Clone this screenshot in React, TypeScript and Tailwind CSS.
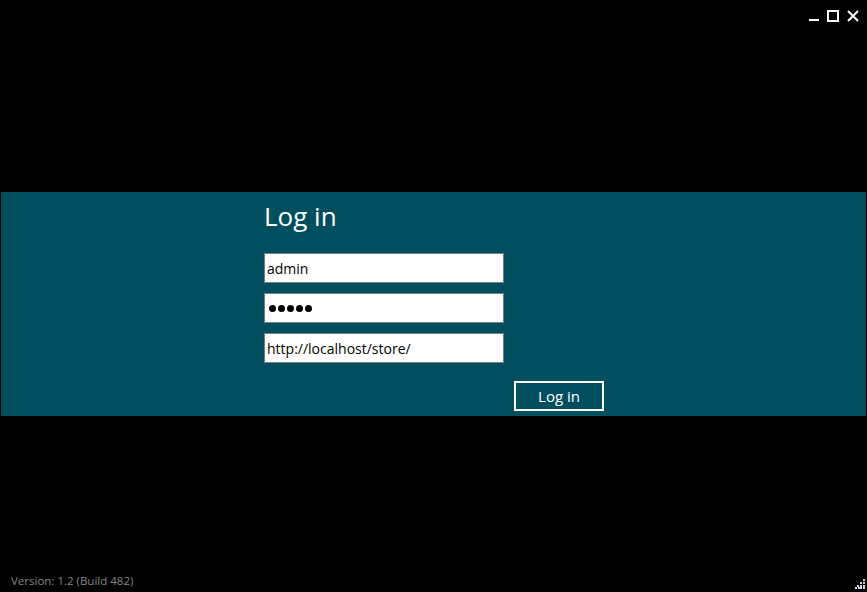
import React from 'react';

const font = { fontFamily: '"Open Sans", "Noto Sans", sans-serif' };

function WindowControls() {
  return (
    <div className="flex items-start justify-end gap-[8px] pr-[8px] pt-[10px]">
      {/* minimize */}
      <svg width="10" height="12" viewBox="0 0 10 12">
        <rect x="0" y="9" width="10" height="2" fill="#fff" />
      </svg>
      {/* maximize */}
      <svg width="12" height="12" viewBox="0 0 12 12">
        <rect x="1" y="1" width="10" height="10" fill="none" stroke="#fff" strokeWidth="2" />
      </svg>
      {/* close */}
      <svg width="12" height="12" viewBox="0 0 12 12">
        <path d="M1 1 L11 11 M11 1 L1 11" stroke="#fff" strokeWidth="2" />
      </svg>
    </div>
  );
}

function Field({ value }: { value: string }) {
  return (
    <input
      type="text"
      defaultValue={value}
      readOnly
      className="block h-[30px] w-[240px] border border-[#7a7a7a] bg-white px-[2px] text-[14px] text-black outline-none"
      style={font}
    />
  );
}

export default function App() {
  return (
    <div className="flex h-[592px] w-[867px] flex-col bg-black" style={font}>
      <div className="h-[192px]">
        <WindowControls />
      </div>

      <div className="mx-px h-[224px] bg-[#014e5f] pl-[263px] pt-[7px]">
        <h1 className="text-[26px] leading-[34px] text-white">Log in</h1>
        <div className="mt-[20px] flex flex-col gap-[10px]">
          <Field value="admin" />
          <div className="flex h-[30px] w-[240px] items-center gap-[2px] border border-[#7a7a7a] bg-white pl-[4px]">
            {[0, 1, 2, 3, 4].map((i) => (
              <span key={i} className="inline-block h-[7px] w-[7px] rounded-full bg-black" />
            ))}
          </div>
          <Field value="http://localhost/store/" />
        </div>
        <div className="mt-[18px] pl-[250px]">
          <button className="flex h-[30px] w-[90px] items-center justify-center border-2 border-white text-[15px] text-white">
            Log in
          </button>
        </div>
      </div>

      <div className="flex flex-1 items-end justify-between pb-[3px] pl-[11px] pr-[2px]">
        <span className="text-[11.5px] leading-[16px] text-[#858585]">Version: 1.2 (Build 482)</span>
        <svg width="10" height="10" viewBox="0 0 10 10">
          {[
            [8, 0],
            [5, 3], [8, 3],
            [2, 6], [5, 6], [8, 6],
            [0, 8], [3, 8], [5, 8], [8, 8],
          ].map(([x, y], i) => (
            <rect key={i} x={x} y={y} width="2" height="2" fill="#cfd3e0" />
          ))}
        </svg>
      </div>
    </div>
  );
}
